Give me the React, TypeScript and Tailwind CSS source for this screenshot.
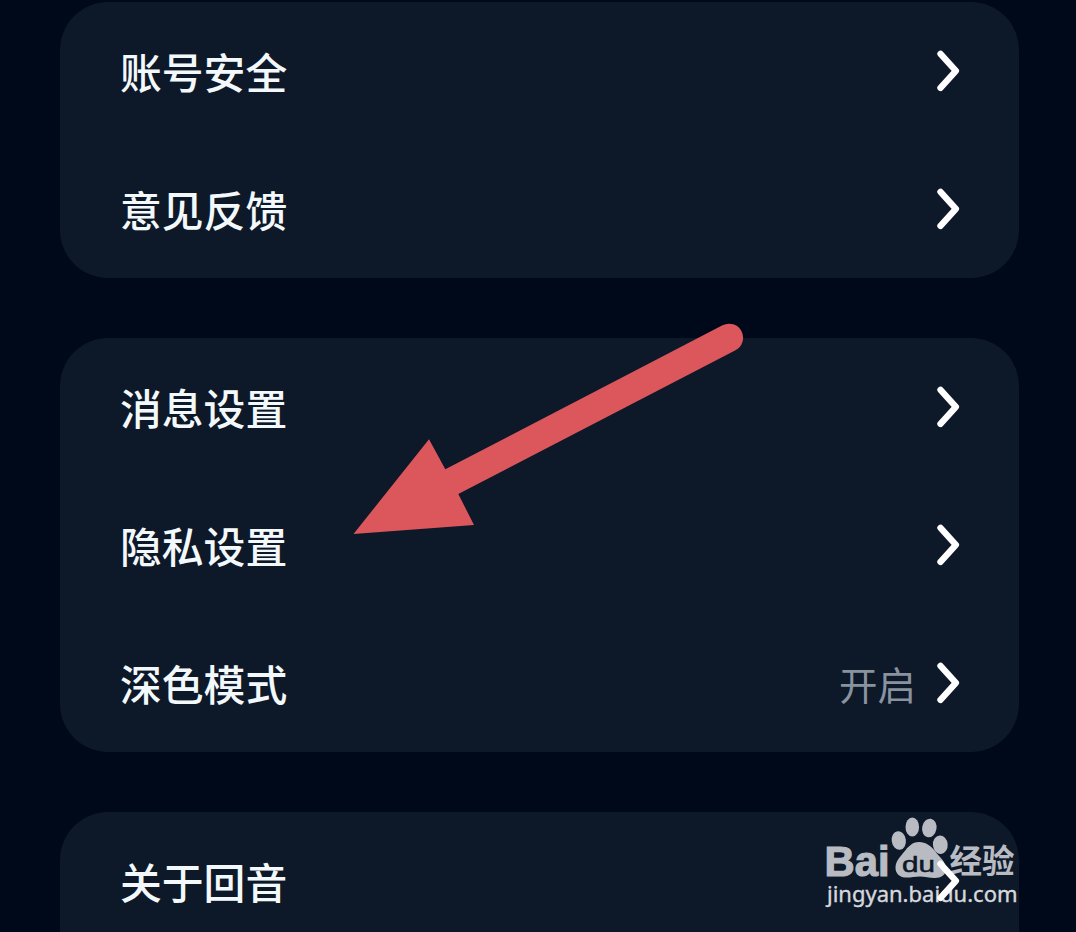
type Item = {
  label: string;
  value?: string;
};

const groups: Item[][] = [
  [{ label: "账号安全" }, { label: "意见反馈" }],
  [
    { label: "消息设置" },
    { label: "隐私设置" },
    { label: "深色模式", value: "开启" },
  ],
  [{ label: "关于回音" }, { label: "" }],
];

function Chevron() {
  return (
    <svg className="relative z-10 h-[42px] w-6" viewBox="0 0 24 42" fill="none">
      <path
        d="M4.5 3.8 19.9 20.8 4.5 37.8"
        stroke="#ffffff"
        strokeWidth="6.4"
        strokeLinecap="round"
        strokeLinejoin="round"
      />
    </svg>
  );
}

function Row({ item }: { item: Item }) {
  return (
    <div className="flex h-[138px] items-center pr-[59px] pl-[60px]">
      <span className="flex-1 pt-0.5 text-[41.8px] leading-none font-medium text-[#f3f8fb]">
        {item.label}
      </span>
      {item.value && (
        <span className="mr-5 text-[38.5px] leading-none text-[#89939f]">
          {item.value}
        </span>
      )}
      <Chevron />
    </div>
  );
}

/* 红色指示箭头 */
function Arrow() {
  return (
    <svg
      className="absolute top-[310px] left-[340px] h-[240px] w-[420px]"
      viewBox="340 310 420 240"
    >
      <path
        d="M353.5 534 429 439.3 445.3 469.3 722.5 325.3A13.9 13.9 0 0 1 735.5 350.3L458.3 494 474 525Z"
        fill="#dc575c"
      />
    </svg>
  );
}

/* 右下角水印 */
function Watermark() {
  return (
    <svg
      className="absolute top-[800px] left-[810px] h-[132px] w-[220px]"
      viewBox="810 800 220 132"
    >
      <g fill="#b8bbc2">
        <ellipse cx="898.8" cy="840.5" rx="7.1" ry="9.4" transform="rotate(-8 898.8 840.5)" />
        <ellipse cx="912.3" cy="827" rx="6.8" ry="9.6" />
        <ellipse cx="929.3" cy="828" rx="7.2" ry="9.4" transform="rotate(10 929.3 828)" />
        <ellipse cx="940.3" cy="844.7" rx="7.4" ry="9.3" transform="rotate(-5 940.3 844.7)" />
        <path d="M919 842C926 842 931 846 935 851C939 857 946 861 946 869C946 875 941 878 935 878C929 878 925 876.5 920 876.5C914 876.5 910 878 905 877.5C899 877 895.5 873 895.5 868C895.5 861 900 857 904 852C908 847 912 842 919 842Z" />
        <g className="font-['Liberation_Sans',sans-serif]">
          <text
            className="font-bold"
            x="824.5"
            y="876"
            fontSize="43"
            textLength="65"
            lengthAdjust="spacingAndGlyphs"
            stroke="#b8bbc2"
            strokeWidth="1.2"
          >
            Bai
          </text>
          <text
            x="902"
            y="872"
            fontSize="22"
            textLength="33"
            lengthAdjust="spacingAndGlyphs"
            fill="#0c1728"
            stroke="#0c1728"
            strokeWidth="0.5"
          >
            du
          </text>
        </g>
        <text
          className="font-['Noto_Sans_CJK_SC',sans-serif] font-bold"
          x="949.5"
          y="873"
          fontSize="32.5"
        >
          经验
        </text>
      </g>
      <text
        className="font-['Noto_Sans',sans-serif]"
        x="827"
        y="902"
        fontSize="22.5"
        textLength="190.5"
        lengthAdjust="spacingAndGlyphs"
        fill="#d5d8dc"
        stroke="#d5d8dc"
        strokeWidth="0.4"
      >
        jingyan.baidu.com
      </text>
    </svg>
  );
}

export default function App() {
  return (
    <main className="relative h-[932px] w-[1076px] overflow-hidden bg-[#000919] pt-0.5 pr-[57px] pl-[60px] font-['Noto_Sans_CJK_SC',sans-serif]">
      <div className="flex flex-col gap-[60px]">
        {groups.map((items, i) => (
          <section key={i} className="rounded-[48px] bg-[#0d1829]">
            {items.map((item, j) => (
              <Row key={j} item={item} />
            ))}
          </section>
        ))}
      </div>
      <Arrow />
      <Watermark />
    </main>
  );
}
